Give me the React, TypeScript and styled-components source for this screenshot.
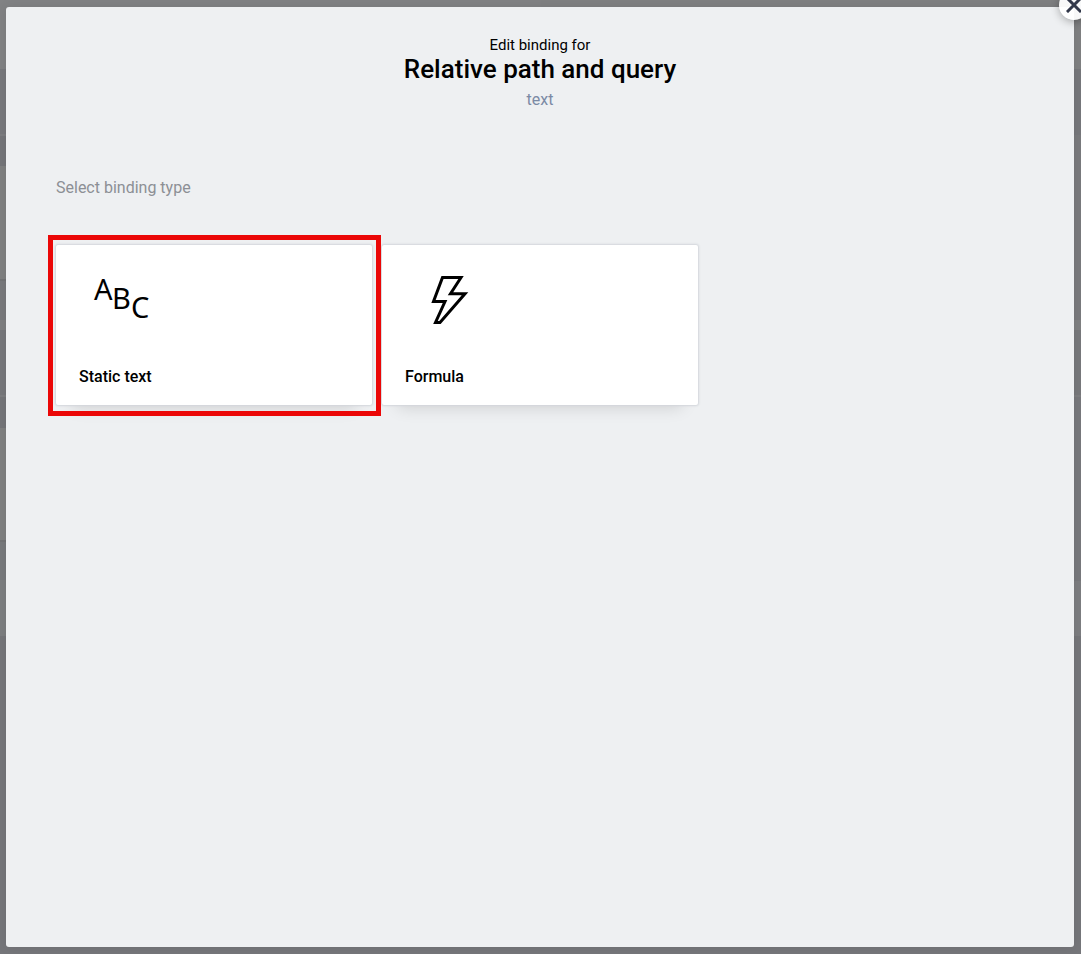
import React from "react";
import styled, { createGlobalStyle } from "styled-components";

const GlobalStyle = createGlobalStyle`
  *, *::before, *::after { box-sizing: border-box; }
  body {
    margin: 0;
    font-family: Roboto, "Noto Sans", "Liberation Sans", sans-serif;
    color: #000;
  }
`;

const leftBands = `linear-gradient(to bottom,
  #818284 0 69px, #77787c 69px 134px, #7c7d80 134px 136px, #747579 136px 166px,
  #7f8081 166px 279px, #727375 279px 281px, #78797c 281px 320px, #7e7f81 320px 330px,
  #76777b 330px 395px, #7c7d80 395px 397px, #747579 397px 428px, #7f8081 428px 540px,
  #727375 540px 542px, #77797c 542px 580px, #7c7e80 580px 636px, #75767a 636px)`;

const rightBands = `linear-gradient(to bottom,
  #7f8082 0 69px, #76777b 69px 135px, #797a7d 135px 320px, #7f8082 320px 330px,
  #77787b 330px 395px, #7d7e81 395px 397px, #77787c 397px 581px, #7c7d80 581px 636px,
  #75767a 636px)`;

const Backdrop = styled.div`
  display: flex;
  min-height: 100vh;
  padding: 7px 7px 7px 6px;
  overflow: hidden;
  background:
    ${leftBands} left / 50% 100% no-repeat,
    ${rightBands};
`;

const Dialog = styled.section`
  position: relative;
  flex: 1;
  padding: 28px 50px;
  border-radius: 3px;
  background: #eef0f2;
  box-shadow: 0 0 12px rgba(0, 0, 0, 0.08);
`;

const CloseButton = styled.button`
  position: absolute;
  top: -17px;
  right: -15px;
  display: flex;
  align-items: center;
  justify-content: center;
  width: 30px;
  height: 30px;
  padding: 0;
  border: 0;
  border-radius: 50%;
  background: rgba(255, 255, 255, 0.95);
  box-shadow: 0 2px 8px rgba(0, 0, 0, 0.3);
  color: #32384a;
`;

const Header = styled.header`
  display: flex;
  flex-direction: column;
  align-items: center;
  text-align: center;
`;

const Eyebrow = styled.p`
  margin: 0;
  font-size: 15px;
  line-height: 20px;
`;

const Title = styled.h1`
  margin: 0;
  font-size: 26px;
  line-height: 28px;
  font-weight: 500;
`;

const ValueType = styled.p`
  margin: 7px 0 0;
  font-size: 16px;
  line-height: 20px;
  color: #7b8aa5;
`;

const Prompt = styled.h2`
  margin: 68px 0 47px;
  font-size: 16px;
  line-height: 20px;
  font-weight: 400;
  color: #8c8f95;
`;

const Options = styled.div`
  display: grid;
  grid-template-columns: repeat(3, 1fr);
  gap: 10px;
`;

const OptionCard = styled.button<{ $marked?: boolean }>`
  position: relative;
  z-index: ${({ $marked }) => ($marked ? 1 : 0)};
  display: flex;
  flex-direction: column;
  align-items: flex-start;
  justify-content: space-between;
  height: 160px;
  padding: 20px 23px 18px;
  border: 0;
  border-radius: 2px;
  background: #fff;
  box-shadow: 0 0 2px 1px #d3d6db, 0 18px 16px -16px rgba(0, 0, 0, 0.14);
  font: inherit;
  color: inherit;
  text-align: left;

  &::after {
    content: "";
    display: ${({ $marked }) => ($marked ? "block" : "none")};
    position: absolute;
    inset: -10px -9px -11px -8px;
    border: 5px solid #eb0707;
  }
`;

const OptionLabel = styled.span`
  font-size: 16px;
  line-height: 20px;
  font-weight: 500;
`;

const IconSlot = styled.svg`
  display: block;
  width: 80px;
  height: 70px;
  font-family: "Noto Sans", sans-serif;
  font-size: 29px;
`;

function TextIcon() {
  return (
    <IconSlot viewBox="0 0 80 70" aria-hidden="true">
      <text x="15" y="35">A</text>
      <text x="33" y="44">B</text>
      <text x="52" y="53">C</text>
    </IconSlot>
  );
}

function FormulaIcon() {
  return (
    <IconSlot viewBox="0 0 80 70" aria-hidden="true">
      <path
        d="M37.5 12.5H56L45.5 28.8H60L35 57.5H30.5L40 36.5H28.5Z"
        fill="none"
        stroke="#000"
        strokeWidth="3"
      />
    </IconSlot>
  );
}

export default function App() {
  return (
    <>
      <GlobalStyle />
      <Backdrop>
        <Dialog role="dialog" aria-labelledby="binding-title">
          <CloseButton aria-label="Close">
            <svg width="16" height="16" viewBox="0 0 16 16" aria-hidden="true">
              <path d="M2 2L14 14M14 2L2 14" stroke="currentColor" strokeWidth="3" strokeLinecap="square" />
            </svg>
          </CloseButton>
          <Header>
            <Eyebrow>Edit binding for</Eyebrow>
            <Title id="binding-title">Relative path and query</Title>
            <ValueType>text</ValueType>
          </Header>
          <Prompt>Select binding type</Prompt>
          <Options>
            <OptionCard $marked>
              <TextIcon />
              <OptionLabel>Static text</OptionLabel>
            </OptionCard>
            <OptionCard>
              <FormulaIcon />
              <OptionLabel>Formula</OptionLabel>
            </OptionCard>
          </Options>
        </Dialog>
      </Backdrop>
    </>
  );
}
